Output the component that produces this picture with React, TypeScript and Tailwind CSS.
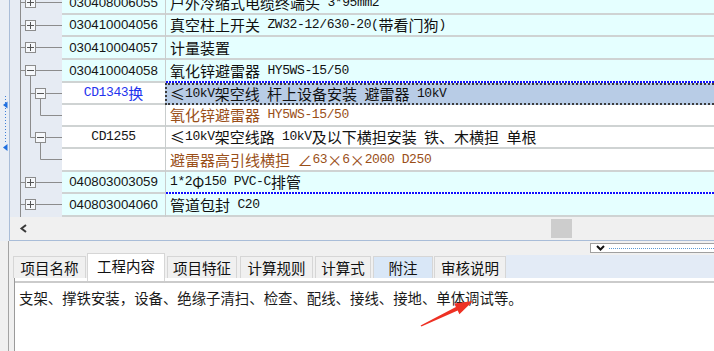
import React from 'react';

type Kind = 'plus' | 'open' | 'child' | 'childLast' | 'leaf' | 'leafLast';

interface Row {
  kind: Kind;
  h: number;
  code: string;
  desc: string;
  top?: boolean;
  child?: boolean;
  blue?: boolean;
  brown?: boolean;
  selected?: boolean;
  dash?: boolean;
}

// rows start 8px above the visible area, heights keep lines on whole pixels
const ROWS: Row[] = [
  { kind: 'plus', h: 23, code: '030408006055', desc: '户外冷缩式电缆终端头 3*95mm2', top: true },
  { kind: 'plus', h: 22, code: '030410004056', desc: '真空柱上开关 ZW32-12/630-20(带看门狗)', top: true },
  { kind: 'plus', h: 23, code: '030410004057', desc: '计量装置', top: true },
  { kind: 'open', h: 23, code: '030410004058', desc: '氧化锌避雷器 HY5WS-15/50', top: true, dash: true },
  { kind: 'child', h: 22, code: 'CD1343换', desc: '≤10kV架空线 杆上设备安装 避雷器 10kV', child: true, blue: true, selected: true },
  { kind: 'leaf', h: 22, code: '', desc: '氧化锌避雷器 HY5WS-15/50', brown: true },
  { kind: 'childLast', h: 22, code: 'CD1255', desc: '≤10kV架空线路 10kV及以下横担安装 铁、木横担 单根', child: true },
  { kind: 'leafLast', h: 23, code: '', desc: '避雷器高引线横担 ∠63×6×2000 D250', brown: true },
  { kind: 'plus', h: 22, code: '040803003059', desc: '1*2Φ150 PVC-C排管', top: true, dash: true },
  { kind: 'plus', h: 23, code: '040803004060', desc: '管道包封 C20', top: true },
];

const TABS = [
  { label: '项目名称', cls: 'w-[73px] ml-0 bg-[#f0f0f0]' },
  { label: '工程内容', cls: 'w-[78px] ml-[1px]', selected: true },
  { label: '项目特征', cls: 'w-[70px] ml-[2px] bg-[#f0f0f0]' },
  { label: '计算规则', cls: 'w-[73px] ml-[3px] bg-[#f0f0f0]' },
  { label: '计算式', cls: 'w-[56px] ml-[2px] bg-[#f0f0f0]' },
  { label: '附注', cls: 'w-[60px] ml-[2px] bg-[#d9e7f7]' },
  { label: '审核说明', cls: 'w-[72px] ml-[1px] bg-[#f0f0f0]' },
];

// SimSun-like mix: half-width latin, full-width CJK
function Mixed({ text }: { text: string }) {
  const parts = text.split(/([\x20-\x7e]+)/).filter((p) => p.length > 0);
  return (
    <>
      {parts.map((p, i) =>
        /^[\x20-\x7e]+$/.test(p) ? (
          <span
            key={i}
            className="font-['Liberation_Mono',monospace] text-[13px] tracking-[-0.4px] align-[1px]"
          >
            {p}
          </span>
        ) : (
          <span key={i} className="font-['Noto_Sans_CJK_SC',sans-serif] text-[15px]">
            {p}
          </span>
        ),
      )}
    </>
  );
}

const S = '#8c8c8c';

function Box({ x, open }: { x: number; open: boolean }) {
  return (
    <g>
      <rect x={x + 0.5} y={5.5} width={10} height={10} fill="#f6f8fb" stroke={S} />
      <line x1={x + 2} y1={10.5} x2={x + 9} y2={10.5} stroke="#555" />
      {!open && <line x1={x + 5.5} y1={7} x2={x + 5.5} y2={14} stroke="#555" />}
    </g>
  );
}

function Tree({ kind, h }: { kind: Kind; h: number }) {
  const c = 10.5;
  return (
    <svg width={52} height={h} className="block shrink-0">
      <line x1={10.5} y1={0} x2={10.5} y2={h} stroke={S} />
      {(kind === 'plus' || kind === 'open') && (
        <>
          <line x1={10.5} y1={c} x2={15} y2={c} stroke={S} />
          <line x1={26} y1={c} x2={52} y2={c} stroke={S} />
          {kind === 'open' && <line x1={20.5} y1={16} x2={20.5} y2={h} stroke={S} />}
          <Box x={15} open={kind === 'open'} />
        </>
      )}
      {(kind === 'child' || kind === 'childLast') && (
        <>
          <line x1={20.5} y1={0} x2={20.5} y2={kind === 'child' ? h : c} stroke={S} />
          <line x1={20.5} y1={c} x2={25} y2={c} stroke={S} />
          <line x1={36} y1={c} x2={52} y2={c} stroke={S} />
          <line x1={30.5} y1={16} x2={30.5} y2={h} stroke={S} />
          <Box x={25} open />
        </>
      )}
      {(kind === 'leaf' || kind === 'leafLast') && (
        <>
          {kind === 'leaf' && <line x1={20.5} y1={0} x2={20.5} y2={h} stroke={S} />}
          <line x1={30.5} y1={0} x2={30.5} y2={c} stroke={S} />
          <line x1={30.5} y1={c} x2={52} y2={c} stroke={S} />
        </>
      )}
    </svg>
  );
}

function GridRow({ row }: { row: Row }) {
  const bg = row.top ? 'bg-[#e5ffff]' : 'bg-white';
  return (
    <div className={`flex ${row.h === 23 ? 'h-[23px]' : 'h-[22px]'}`}>
      <Tree kind={row.kind} h={row.h} />
      <div className={`w-[103px] shrink-0 flex flex-col ${bg}`}>
        <div
          className={`flex-1 flex items-center justify-center leading-[16px] whitespace-pre ${
            row.blue ? 'text-[#2233ee]' : 'text-[#151515]'
          }`}
        >
          {row.child ? (
            <Mixed text={row.code} />
          ) : (
            <span className="font-['Liberation_Sans',sans-serif] text-[13.3px]">{row.code}</span>
          )}
        </div>
        <div className="h-[2px] bg-[#cfd3d3]" />
      </div>
      <div className={`flex-1 min-w-0 flex flex-col border-l border-[#c9cdcd] ${bg}`}>
        {row.selected ? (
          <div className="flex-1 flex items-center pl-[3px] -ml-px bg-[#b8cce6] border-2 border-r-0 border-dotted border-[#3c3c3c] leading-[16px] whitespace-pre text-[#111]">
            <Mixed text={row.desc} />
          </div>
        ) : (
          <>
            <div
              className={`flex-1 flex items-center pl-[4px] leading-[16px] whitespace-pre ${
                row.brown ? 'text-[#9a4f18]' : 'text-[#111]'
              }`}
            >
              <Mixed text={row.desc} />
            </div>
            {row.dash ? (
              <div className="h-[2px] bg-[repeating-linear-gradient(90deg,#1010ff_0px,#1010ff_2px,#ffffff_2px,#ffffff_3px)]" />
            ) : (
              <div className="h-[2px] bg-[#cfd3d3]" />
            )}
          </>
        )}
      </div>
    </div>
  );
}

function LeftMarks() {
  return (
    <svg width={9} height={241} className="block">
      <line x1={5.5} y1={96} x2={5.5} y2={143} stroke="#3d7fd8" strokeDasharray="1 2" />
      <polygon points="3,105 7.5,101.5 7.5,108.5" fill="#1e6fe0" />
      <polygon points="3,147.5 7.5,144 7.5,151" fill="#1e6fe0" />
    </svg>
  );
}

export default function App() {
  return (
    <div className="relative w-[714px] h-[351px] overflow-hidden bg-[#f0f0f0] font-['Liberation_Sans','Noto_Sans_CJK_SC',sans-serif] text-[#111]">
      {/* grid panel */}
      <div className="flex h-[241px]">
        <div className="w-[9px] shrink-0 bg-[#e9eef5]">
          <LeftMarks />
        </div>
        <div className="flex-1 min-w-0 flex flex-col border-l border-b border-[#a9bdd8]">
          <div className="h-[217px] overflow-hidden bg-[#e6ebf3]">
            <div className="mt-[-8px]">
              {ROWS.map((r, i) => (
                <GridRow key={i} row={r} />
              ))}
            </div>
          </div>
          <div className="h-[23px] flex items-center bg-[#f0f0f0]">
            <svg width={20} height={23} className="block shrink-0">
              <polyline points="16,8 11.5,11.5 16,15" fill="none" stroke="#3a3a3a" strokeWidth={2} />
            </svg>
            <div className="ml-[521px] w-[21px] h-[19px] bg-[#cdcdcd]" />
          </div>
        </div>
      </div>

      {/* detail panel */}
      <div className="flex h-[110px]">
        <div className="w-[8px] shrink-0" />
        <div className="flex-1 min-w-0 flex flex-col border-l border-[#a3a3a3]">
          <div className="h-[13px] flex justify-end pt-[2px]">
            <div className="w-[124px] h-[10px] flex items-center bg-white border-l border-t border-b border-[#a0a0a0]">
              <svg width={18} height={8} className="block shrink-0">
                <polyline points="6,2 9.5,5.5 13,2" fill="none" stroke="#111" strokeWidth={2} />
              </svg>
              <div className="flex-1 h-px bg-[repeating-linear-gradient(90deg,#5b9bd5_0px,#5b9bd5_1px,transparent_1px,transparent_2px)]" />
            </div>
          </div>
          <div className="h-[24px] flex pl-[4px]">
            {TABS.map((t) =>
              t.selected ? (
                <div
                  key={t.label}
                  className={`${t.cls} relative z-10 -mt-px h-[28px] shrink-0 flex justify-center pt-[3px] bg-white border border-b-0 border-[#d6d6d6] font-['Noto_Sans_CJK_SC',sans-serif] text-[14.5px] leading-[18px] text-[#111]`}
                >
                  {t.label}
                </div>
              ) : (
                <div
                  key={t.label}
                  className={`${t.cls} mt-[2px] h-[22px] shrink-0 flex items-center justify-center border border-b-0 border-[#d6d6d6] font-['Noto_Sans_CJK_SC',sans-serif] text-[14.5px] leading-[18px] text-[#111]`}
                >
                  {t.label}
                </div>
              ),
            )}
            <div className="flex-1 mt-[1px] h-[23px] bg-[#e3ebf6]" />
          </div>
          <div className="flex-1 flex flex-col ml-[5px] border-l border-[#9a9a9a]">
            <div className="h-[3px] bg-white" />
            <div className="h-[2px] bg-[#cbcbcb]" />
            <div className="flex-1 bg-white pl-[4px] pt-[5px] font-['Noto_Sans_CJK_SC',sans-serif] text-[14.4px] leading-[20px] text-[#1a1a1a]">
              支架、撑铁安装，设备、绝缘子清扫、检查、配线、接线、接地、单体调试等。
            </div>
          </div>
        </div>
      </div>

      {/* annotation arrow */}
      <svg width={714} height={351} className="absolute left-0 top-0 pointer-events-none">
        <polygon
          points="420.6,325.6 455.9,307 454.2,303.4 473,301 459.4,314.2 457.7,310.6 421.4,326.4"
          fill="#ee3124"
        />
      </svg>
    </div>
  );
}
